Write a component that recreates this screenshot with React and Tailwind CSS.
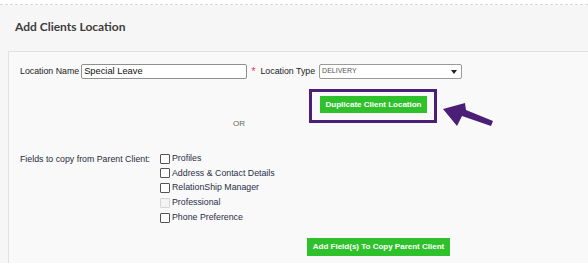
const FIELDS = [
    { label: "Profiles" },
    { label: "Address & Contact Details" },
    { label: "RelationShip Manager" },
    { label: "Professional", disabled: true },
    { label: "Phone Preference" },
];

function Arrow() {
    // purple callout arrow pointing at the duplicate button
    return (
        <svg
            className="absolute left-[440px] top-[98px]"
            width="56"
            height="32"
            viewBox="0 0 56 32"
        >
            <polygon
                points="3,11 25,5 26,12 53,23 51,28 22,18 17,28"
                fill="#4b1f78"
            />
        </svg>
    );
}

export default function App() {
    return (
        <div className="relative h-[263px] w-[588px] overflow-hidden bg-white font-['Liberation_Sans',Arial,sans-serif] text-[#333]">
            {/* top dashed rule */}
            <div className="h-[5px] border-b border-dashed border-[#d8d8d8]" />

            {/* header */}
            <div className="flex h-[46px] items-center bg-[#f6f6f6] pl-[15px]">
                <h2 className="mb-[2px] font-['Lato',sans-serif] text-[12px] font-bold text-[#3d3d3d]">
                    Add Clients Location
                </h2>
            </div>

            {/* panel */}
            <div className="h-full bg-[#f6f6f6] pl-[8px]">
                <div className="h-full border-l border-t border-[#e2e2e2] bg-[#f9f9f9] pl-[11px] pt-[12px] text-[8.8px]">
                    {/* row 1 */}
                    <div className="flex h-[15px] items-center">
                        <span className="text-[#222]">Location Name</span>
                        <div className="ml-[2px] flex h-[15px] w-[166px] items-center rounded-[2px] border border-[#8f8f8f] bg-white pl-[2px] text-[9.3px] text-[#111]">
                            Special Leave
                        </div>
                        <span className="ml-[4px] text-[11px] leading-none text-[#e8474f]">*</span>
                        <span className="ml-[5px] text-[#222]">Location Type</span>
                        <div className="ml-[4px] flex h-[15px] w-[143px] items-center justify-between rounded-[2px] border border-[#9a9a9a] bg-white pl-[2px] pr-[4px] text-[7px] text-[#555]">
                            <span>DELIVERY</span>
                            <svg width="6" height="4" viewBox="0 0 6 4">
                                <polygon points="0,0 6,0 3,4" fill="#222" />
                            </svg>
                        </div>
                    </div>

                    {/* duplicate button, outlined */}
                    <div className="ml-[289px] mt-[10px] w-[128px] border-[3px] border-[#4b1f78] pb-[7px] pl-[8px] pr-[6px] pt-[4px]">
                        <button className="flex h-[17px] w-[107px] items-center justify-center bg-[#2fc12b] text-[8px] font-bold text-white">
                            Duplicate Client Location
                        </button>
                    </div>

                    <div className="ml-[213px] mt-[-5px] text-[8px] text-[#666]">OR</div>

                    {/* fields to copy */}
                    <div className="mt-[23px] flex">
                        <span className="w-[140px] text-[#2a2a3a]">
                            Fields to copy from Parent Client:
                        </span>
                        <div className="flex flex-col gap-[3.75px]">
                            {FIELDS.map((f) => (
                                <label key={f.label} className="flex h-[11px] items-center">
                                    <span
                                        className={
                                            f.disabled
                                                ? "h-[10px] w-[10px] rounded-[1px] border border-[#d6d6d6] bg-[#f3f3f3]"
                                                : "h-[10px] w-[10px] rounded-[1px] border border-[#555] bg-white"
                                        }
                                    />
                                    <span className="ml-[2px] text-[#2a2f45]">{f.label}</span>
                                </label>
                            ))}
                        </div>
                    </div>

                    <button className="ml-[287px] mt-[15px] flex h-[18px] w-[143px] items-center justify-center bg-[#2fc12b] text-[8px] font-bold text-white">
                        Add Field(s) To Copy Parent Client
                    </button>
                </div>
            </div>

            <Arrow />
        </div>
    );
}
